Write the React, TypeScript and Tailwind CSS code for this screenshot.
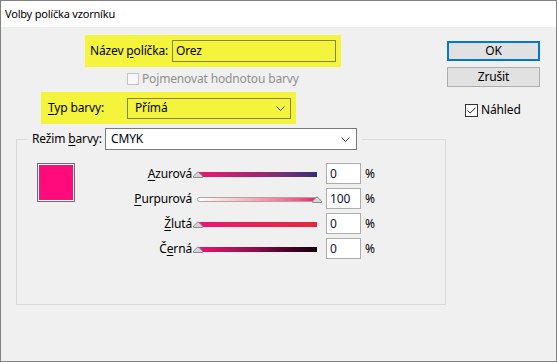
import React from 'react';

type Row = {
  pre: string;
  key: string;
  post: string;
  value: string;
  track: string;
  light?: boolean;
};

const rows: Row[] = [
  {
    pre: '',
    key: 'A',
    post: 'zurová',
    value: '0',
    track: 'bg-linear-to-r from-[#e8186e] via-[#a3246f] to-[#352c7a]',
  },
  {
    pre: '',
    key: 'P',
    post: 'urpurová',
    value: '100',
    track: 'bg-linear-to-r from-[#ffffff] to-[#f0126e]',
    light: true,
  },
  {
    pre: '',
    key: 'Ž',
    post: 'lutá',
    value: '0',
    track: 'bg-linear-to-r from-[#e8166e] to-[#e52a3c]',
  },
  {
    pre: 'Č',
    key: 'e',
    post: 'rná',
    value: '0',
    track: 'bg-linear-to-r from-[#ea166f] via-[#8a0d48] to-[#16000b]',
  },
];

const Thumb = () => (
  <svg width="10" height="7" viewBox="0 0 10 7" className="block">
    <path d="M0.5 6.5 V5 L5 0.8 L9.5 5 V6.5 Z" fill="#d6d6d6" stroke="#8c8c8c" />
  </svg>
);

const Chevron = () => (
  <svg width="9" height="5" viewBox="0 0 9 5" className="block">
    <polyline points="0.5,0.5 4.5,4.5 8.5,0.5" fill="none" stroke="#444" strokeWidth="1" />
  </svg>
);

const Slider = ({ row }: { row: Row }) => (
  <div className="relative w-[126px] h-[21px]">
    {row.light ? (
      <div
        className={`mt-[9px] ml-[5px] w-[121px] h-[5px] border border-[#a8a8a8] rounded-l-full ${row.track}`}
      />
    ) : (
      <div className={`mt-[9px] ml-[6px] w-[119px] h-[5px] ${row.track}`} />
    )}
    <div className={`absolute top-[8px] ${row.light ? 'left-[120px]' : 'left-[1px]'}`}>
      <Thumb />
    </div>
  </div>
);

const App = () => {
  return (
    <div className="w-[557px] h-[362px] border border-[#828282] bg-[#f0f0f0] font-['Noto_Sans',sans-serif] text-[12px] tracking-[-0.15px] text-black flex flex-col overflow-hidden whitespace-nowrap">
      <div className="h-[26px] bg-white flex items-center pl-[4px] text-[11px] tracking-[-0.2px] shrink-0">
        Volby políčka vzorníku
      </div>

      <div className="flex flex-1">
        {/* left part */}
        <div className="flex flex-col">
          <div className="mt-[8px] ml-[84px] w-[256px] h-[32px] bg-[#f4f43c] flex items-center pl-[5px] pr-[5px]">
            <span>
              Název <span className="underline underline-offset-2">p</span>olíčka:
            </span>
            <div className="ml-auto w-[164px] h-[22px] border border-[#86864a] flex items-center pl-[3px]">
              Orez
            </div>
          </div>

          <div className="mt-[4px] ml-[126px] h-[16px] flex items-center gap-[3px] text-[#8f8f8f]">
            <div className="w-[12px] h-[12px] border border-[#c4c4c4] bg-[#f8f8f8]" />
            <span>Pojmenovat hodnotou barvy</span>
          </div>

          <div className="mt-[5px] ml-[40px] w-[255px] h-[32px] bg-[#f4f43c] flex items-center pl-[7px] pr-[5px]">
            <span>
              <span className="underline underline-offset-2">T</span>yp barvy:
            </span>
            <div className="ml-auto w-[164px] h-[21px] border border-[#86864a] flex items-center pl-[7px] pr-[5px]">
              <span>Přímá</span>
              <div className="ml-auto">
                <Chevron />
              </div>
            </div>
          </div>

          <fieldset className="mt-[4px] ml-[15px] w-[430px] h-[177px] border border-[#dadada] pl-[10px]">
            <legend className="px-[5px] flex items-center">
              <span className="w-[73px]">
                Režim <span className="underline underline-offset-2">b</span>arvy:
              </span>
              <div className="w-[252px] h-[22px] border border-[#7a7a7a] bg-white flex items-center pl-[5px] pr-[6px]">
                <span>CMYK</span>
                <div className="ml-auto">
                  <Chevron />
                </div>
              </div>
            </legend>

            <div className="flex mt-[13px] ml-[10px]">
              <div className="w-[38px] h-[39px] border border-[#6e6e6e] p-[1px] bg-white shrink-0">
                <div className="w-full h-full bg-[#ff0b7b]" />
              </div>

              <div className="flex flex-col gap-[4px]">
                {rows.map((row) => (
                  <div key={row.post} className="flex items-start h-[21px]">
                    <div className="w-[117px] text-right leading-[21px]">
                      {row.pre}
                      <span className="underline underline-offset-2">{row.key}</span>
                      {row.post}
                    </div>
                    <Slider row={row} />
                    <div className="ml-[8px] w-[35px] h-[21px] border border-[#acacac] bg-white flex items-center pl-[3px] text-[#10103a]">
                      {row.value}
                    </div>
                    <div className="ml-[4px] leading-[21px]">%</div>
                  </div>
                ))}
              </div>
            </div>
          </fieldset>
        </div>

        {/* right buttons */}
        <div className="ml-auto mr-[16px] w-[93px] flex flex-col">
          <div className="mt-[14px] h-[20px] border-2 border-[#0078d7] bg-[#e1e1e1] flex items-center justify-center">
            OK
          </div>
          <div className="mt-[6px] h-[20px] border border-[#adadad] bg-[#e1e1e1] flex items-center justify-center">
            Zrušit
          </div>
          <div className="mt-[14px] ml-[18px] flex items-center gap-[3px]">
            <div className="w-[13px] h-[13px] border border-[#333333] bg-white flex items-center justify-center">
              <svg width="9" height="7" viewBox="0 0 9 7">
                <polyline points="0.5,3.5 3.2,6 8.5,0.7" fill="none" stroke="#222" strokeWidth="1" />
              </svg>
            </div>
            <span>Náhled</span>
          </div>
        </div>
      </div>
    </div>
  );
};

export default App;
